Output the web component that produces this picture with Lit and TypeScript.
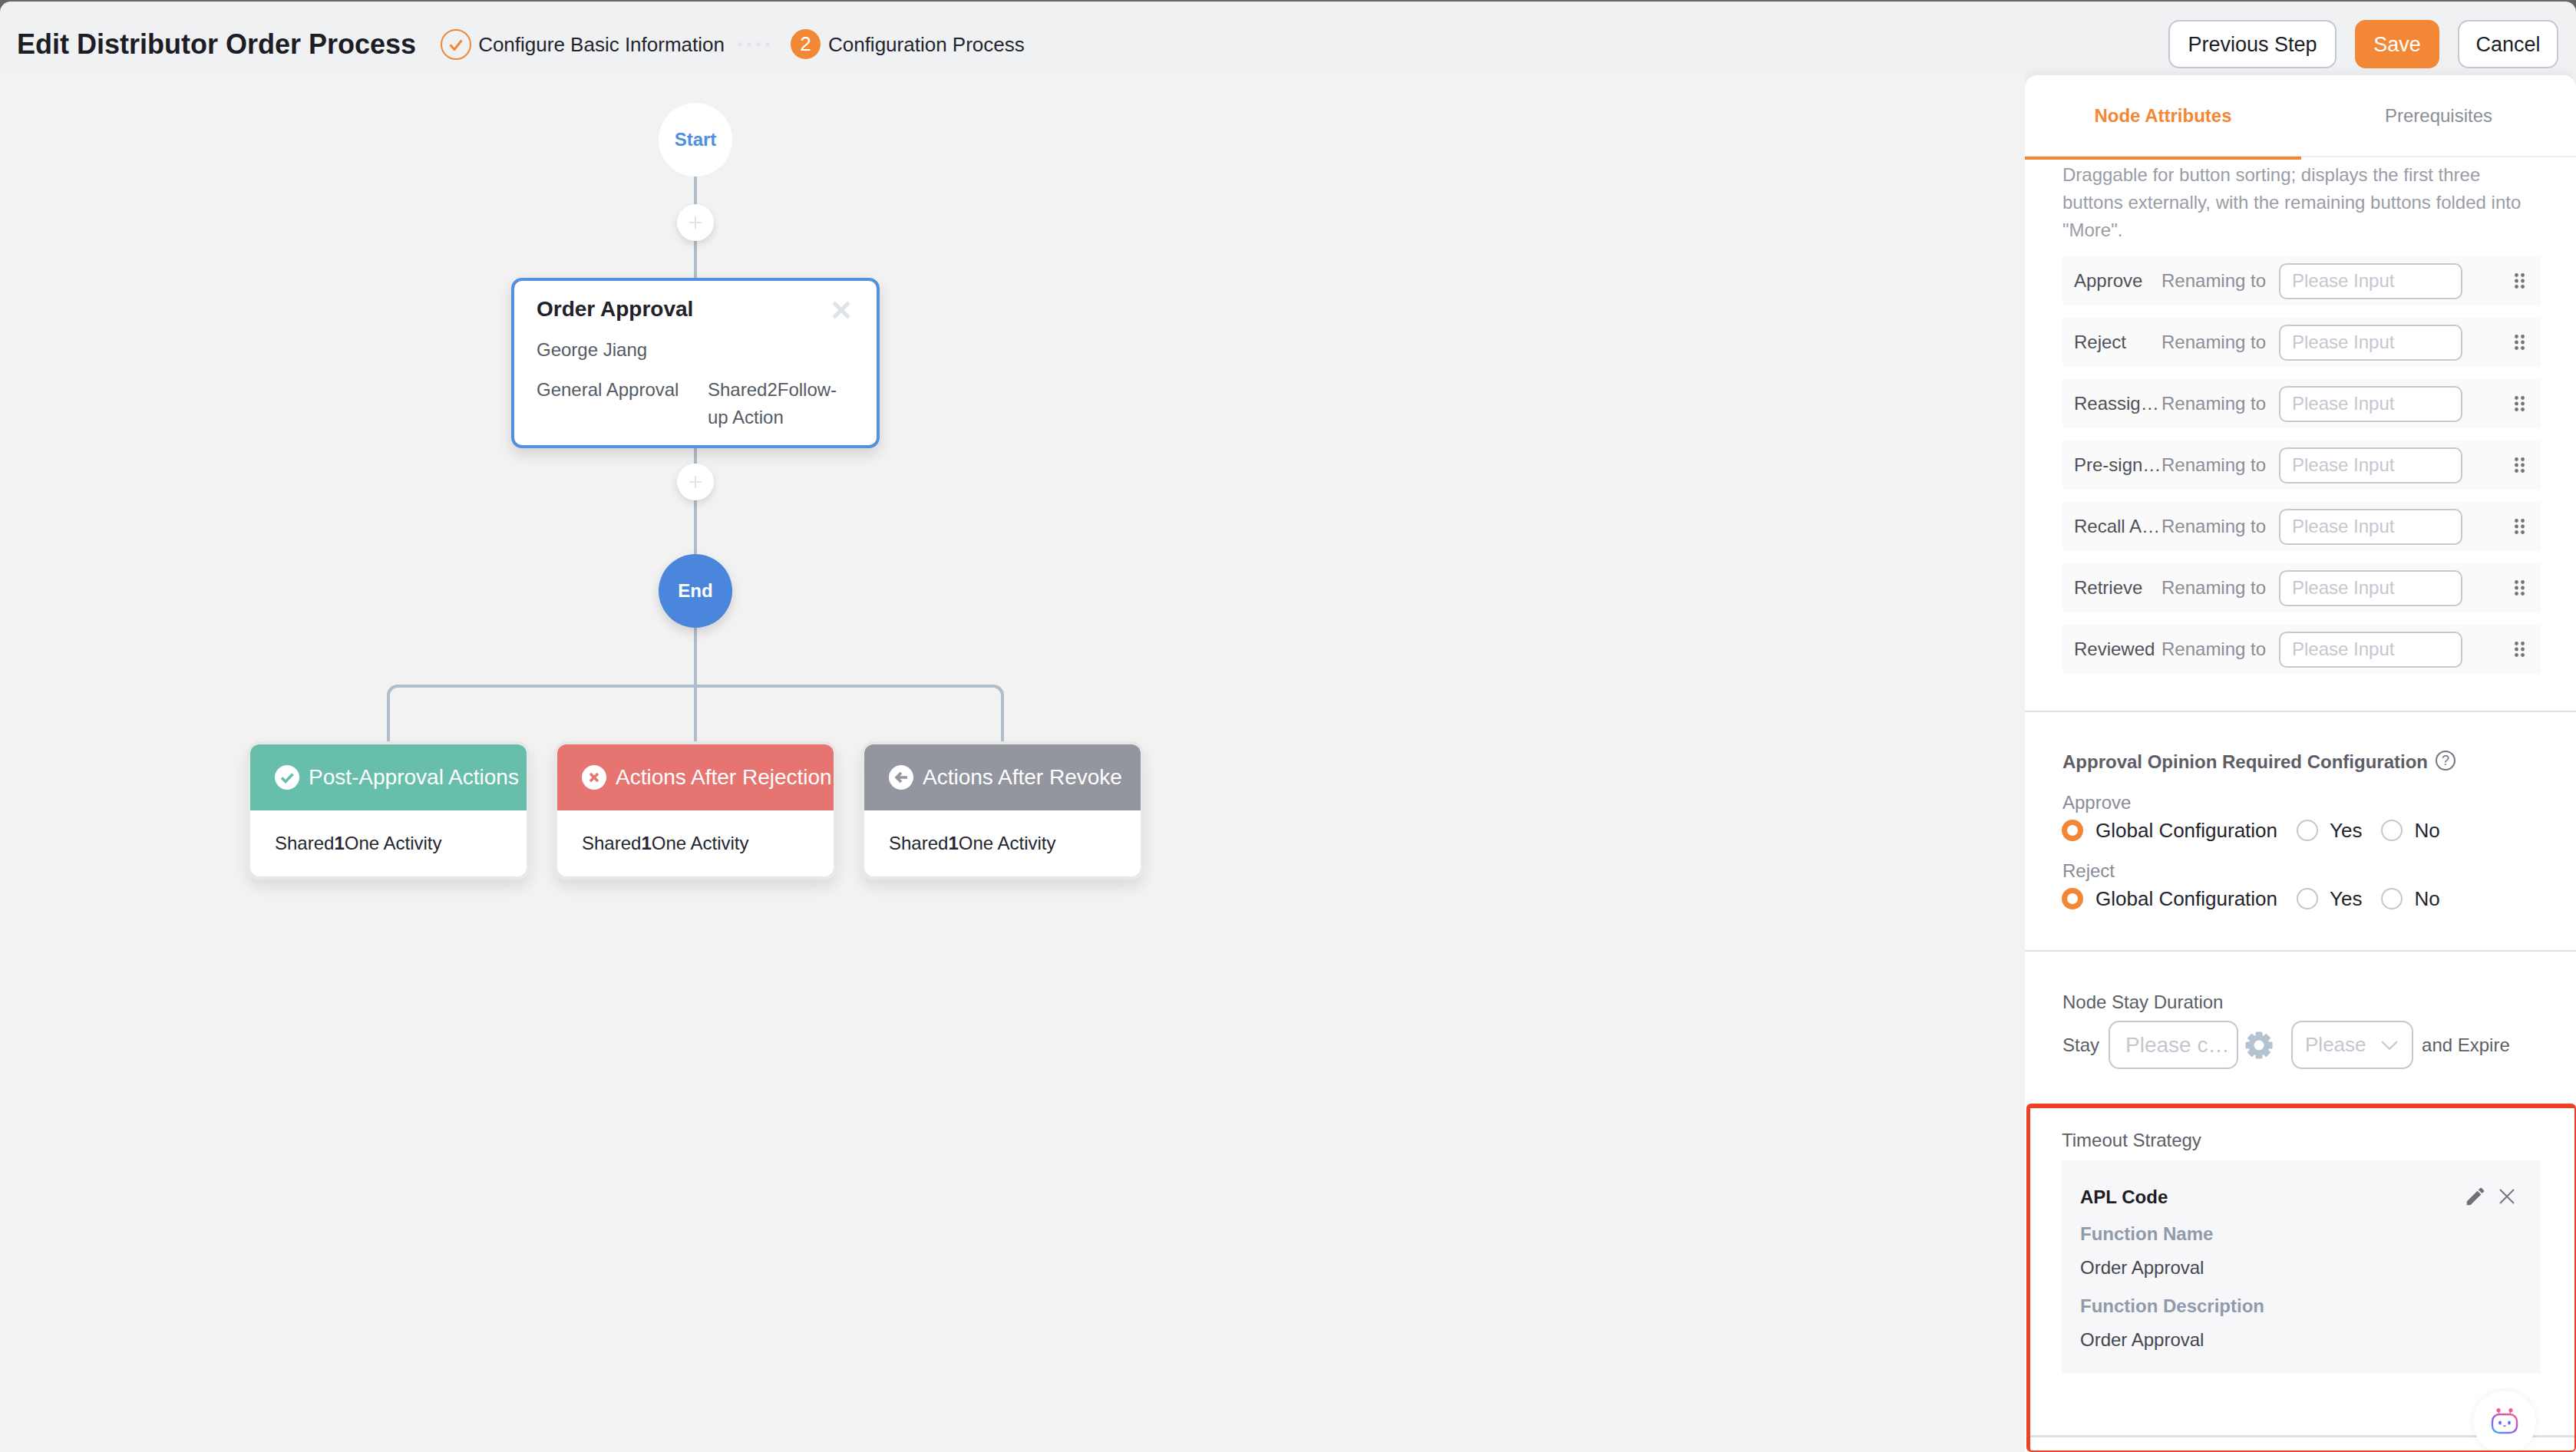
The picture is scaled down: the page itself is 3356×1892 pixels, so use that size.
import { LitElement, html, css, svg } from "lit";
import { customElement } from "lit/decorators.js";

const ROWS = ["Approve", "Reject", "Reassig…", "Pre-sign…", "Recall A…", "Retrieve", "Reviewed"];
const ACTIONS = [
  { cls: "c1 green", title: "Post-Approval Actions", icon: "check" },
  { cls: "c2 red", title: "Actions After Rejection", icon: "cross" },
  { cls: "c3 gray", title: "Actions After Revoke", icon: "back" },
];

@customElement("app-root")
export class AppRoot extends LitElement {
  static styles = css`
    :host { display: block; width: 3356px; height: 1892px; overflow: hidden; background: #666; font-family: "Liberation Sans", Arial, sans-serif; color: #23242c; }
    * { box-sizing: border-box; }
    .page { margin-top: 2px; height: 1890px; border-radius: 14px 14px 0 0; overflow: hidden; background: #f0f1f3; display: flex; flex-direction: column; }
    header { height: 96px; flex: none; display: flex; align-items: center; padding: 15px 23px 0 22px; }
    h1 { margin: 0 32px 0 0; font-size: 36px; line-height: 44px; font-weight: 700; color: #1c1d25; white-space: nowrap; }
    .step { display: flex; align-items: center; gap: 9px; font-size: 26px; white-space: nowrap; }
    .step svg { display: block; }
    .step span { padding-top: 2px; }
    .step.second { gap: 10px; }
    .num { width: 39px; height: 39px; border-radius: 50%; background: #f28736; color: #fff; display: flex; align-items: center; justify-content: center; font-size: 26px; }
    .dots { display: flex; gap: 6px; margin: 0 27px 0 17px; }
    .dots i { width: 6px; height: 6px; border-radius: 50%; background: #e2e4e8; }
    .actions { margin-left: auto; display: flex; gap: 24px; }
    button { height: 63px; border-radius: 14px; border: 2px solid #c4c8d2; background: #fff; font: 27px "Liberation Sans", Arial, sans-serif; color: #1c1d25; padding: 2px 0 0; }
    .b1 { width: 219px; }
    .b2 { width: 110px; background: #f28736; border-color: #f28736; color: #fff; }
    .b3 { width: 131px; }
    .main { flex: 1; min-height: 0; display: grid; grid-template-columns: 1fr 718px; }

    .canvas { position: relative; background: #f2f2f2; }
    .wires { position: absolute; left: 0; top: 0; }
    .circle { position: absolute; left: 858px; width: 96px; height: 96px; border-radius: 50%; display: flex; align-items: center; justify-content: center; font-size: 24px; font-weight: 700; }
    .start { top: 36px; background: #fff; color: #4f8fdf; }
    .end { top: 624px; background: #4a86dc; color: #fff; box-shadow: 0 6px 14px rgba(0,0,0,.14); }
    .plus { position: absolute; left: 882px; width: 48px; height: 48px; border-radius: 50%; background: #fff; box-shadow: 0 4px 10px rgba(0,0,0,.12); display: flex; align-items: center; justify-content: center; }
    .p1 { top: 168px; }
    .p2 { top: 506px; }
    .node { position: absolute; left: 666px; top: 264px; width: 480px; height: 222px; border: 4px solid #5590dc; border-radius: 14px; background: #fff; box-shadow: 0 8px 18px rgba(0,0,0,.13); padding: 19px 29px 0; }
    .node h3 { margin: 0; font-size: 28px; line-height: 36px; font-weight: 700; color: #20212a; }
    .node .x { position: absolute; right: 34px; top: 26px; }
    .node p { margin: 0; font-size: 24px; line-height: 36px; color: #555a64; }
    .node .who { margin-top: 17px; }
    .node .cols { margin-top: 16px; display: grid; grid-template-columns: 223px 180px; }
    .card { position: absolute; top: 868px; width: 368px; height: 180px; border: 4px solid #e8e8e8; border-radius: 16px; background: #fff; overflow: hidden; }
    .shadow { position: absolute; top: 868px; width: 368px; height: 180px; border-radius: 16px; box-shadow: 0 10px 18px rgba(0,0,0,.09); }
    .c1 { left: 322px; }
    .c2 { left: 722px; }
    .c3 { left: 1122px; }
    .card .head { height: 86px; display: flex; align-items: center; gap: 12px; padding: 0 0 0 32px; color: #fff; font-size: 28px; white-space: nowrap; }
    .green .head { background: #67bfab; }
    .red .head { background: #e67572; }
    .gray .head { background: #94969f; }
    .card .head svg { flex: none; display: block; }
    .card .body { padding: 25px 32px; font-size: 24px; line-height: 36px; color: #23262e; }
    .card b { font-weight: 700; }

    .panel { background: #fff; border-radius: 16px 16px 0 0; box-shadow: 0 -4px 14px rgba(0,0,0,.05); display: flex; flex-direction: column; min-height: 0; overflow: hidden; }
    .tabs { height: 107px; flex: none; border-bottom: 2px solid #eee; display: grid; grid-template-columns: 360px 1fr; margin-bottom: 5px; }
    .tab { height: 110px; display: flex; padding-top: 35px; justify-content: center; font-size: 24px; line-height: 36px; color: #8b8e98; }
    .tab.on { color: #f28736; font-weight: 700; border-bottom: 4px solid #f28736; }
    .sec { padding: 0 46px 0 49px; border-bottom: 2px solid #e2e2e2; }
    .s1 { padding-bottom: 48px; }
    .s2 { padding-top: 47px; padding-bottom: 49px; }
    .s3 { border-bottom: 0; padding-top: 48px; padding-bottom: 45px; }
    .desc { margin: 0 0 16px; font-size: 24px; line-height: 36px; color: #9a9ca6; }
    .rows { display: flex; flex-direction: column; gap: 16px; }
    .row { height: 64px; background: #fafafa; display: flex; align-items: center; padding-left: 15px; font-size: 24px; }
    .name { width: 114px; flex: none; color: #4f5159; white-space: nowrap; }
    .ren { width: 153px; flex: none; color: #8b8e98; white-space: nowrap; }
    input { font-family: inherit; outline: none; background: #fff; border: 2px solid #c4c8d2; min-width: 0; }
    input::placeholder { color: #c4c7d0; opacity: 1; }
    .row input { width: 239px; height: 47px; border-radius: 10px; padding: 0 15px; font-size: 24px; flex: none; }
    .grip { margin-left: 68px; display: block; }
    .sub { font-size: 24px; line-height: 36px; color: #8a8c95; }
    .h { font-size: 24px; line-height: 36px; font-weight: 700; color: #5c5e66; display: flex; align-items: center; gap: 10px; }
    .q { width: 26px; height: 26px; border: 2px solid #73767f; border-radius: 50%; color: #73767f; font-size: 18px; font-weight: 400; line-height: 22px; text-align: center; margin-top: -5px; }
    .s2 .sub { margin-top: 17px; }
    .radios { display: flex; align-items: center; height: 36px; font-size: 26px; color: #23242c; margin-left: -1px; }
    .radio { width: 28px; height: 28px; flex: none; border-radius: 50%; border: 2px solid #c4c8d2; margin-right: 15px; }
    .radio.on { border: 7px solid #f28736; margin-right: 16px; }
    .radios span { margin-right: 25px; }
    .sub2 { font-size: 24px; line-height: 36px; color: #5c5e66; }
    .stay { margin-top: 6px; display: flex; align-items: center; font-size: 24px; color: #5c5e66; white-space: nowrap; }
    .stay input { width: 169px; height: 63px; border-radius: 14px; margin-left: 12px; padding: 0 6px 0 20px; font-size: 28px; text-overflow: ellipsis; }
    .stay svg.gear { margin: 0 24px 0 9px; display: block; }
    .sel { width: 159px; height: 63px; border: 2px solid #c4c8d2; border-radius: 14px; display: flex; align-items: center; justify-content: space-between; padding: 0 18px 0 16px; font-size: 26px; color: #c4c7d0; margin-right: 11px; background: #fff; }
    .timeout { position: relative; flex: 1; min-height: 0; margin-left: 2px; border: solid #ee4022; border-width: 6px 2px 2px 5px; border-radius: 6px; padding: 24px 44px 0 41px; overflow: hidden; }
    .box { margin-top: 8px; height: 278px; background: #f7f7f9; padding: 30px 24px 0; position: relative; }
    .box .t { font-size: 24px; line-height: 36px; font-weight: 700; color: #1c1d25; }
    .box .k { font-size: 24px; line-height: 36px; font-weight: 700; color: #8f9bab; }
    .box .v { font-size: 24px; line-height: 36px; color: #43464e; margin-top: 8px; }
    .k1 { margin-top: 12px; }
    .k2 { margin-top: 14px; }
    .tools { position: absolute; right: 34px; top: 32px; display: flex; gap: 16px; align-items: center; }
    .tools svg { display: block; }
    .rule { margin: 80px -44px 0 -41px; height: 3px; background: #e0e0e0; }
    .fab { position: absolute; left: 577px; top: 368px; width: 82px; height: 82px; border-radius: 50%; background: #fff; box-shadow: 0 0 10px rgba(0,0,0,.07); display: flex; align-items: center; justify-content: center; padding-bottom: 2px; }
    .fab svg { display: block; }
  `;

  private grip() {
    const dots = [0, 1, 2].flatMap((r) => [0, 1].map((c) => svg`<circle cx=${2.5 + c * 8} cy=${2.5 + r * 7.5} r="2.4" fill="#6f727b"></circle>`));
    return html`<svg class="grip" width="13" height="20" viewBox="0 0 13 20">${dots}</svg>`;
  }

  private cardIcon(kind: string) {
    const glyph: Record<string, unknown> = {
      check: svg`<path d="M9 16.5l5 5 9.5-10" fill="none" stroke="#67bfab" stroke-width="3.6"></path>`,
      cross: svg`<path d="M11 11l10 10M21 11L11 21" fill="none" stroke="#e67572" stroke-width="3.6"></path>`,
      back: svg`<path d="M24 16H11M16 10l-6 6 6 6" fill="none" stroke="#94969f" stroke-width="3.6"></path>`,
    };
    return html`<svg width="32" height="32" viewBox="0 0 32 32"><circle cx="16" cy="16" r="16" fill="#fff"></circle>${glyph[kind]}</svg>`;
  }

  private gear() {
    const teeth = [0, 45, 90, 135].map((a) => svg`<rect x="13.5" y="0.5" width="9" height="35" rx="1.5" fill="#b5c2cf" transform="rotate(${a} 18 18)"></rect>`);
    return html`<svg class="gear" width="36" height="36" viewBox="0 0 36 36">${teeth}<circle cx="18" cy="18" r="13.5" fill="#b5c2cf"></circle><circle cx="18" cy="18" r="6.5" fill="#fff"></circle></svg>`;
  }

  private robot() {
    return html`<svg width="40" height="36" viewBox="0 0 40 36" fill="none">
      <defs>
        <linearGradient id="rb" x1="0.2" y1="1" x2="0.8" y2="0">
          <stop offset="0" stop-color="#4f9bff"></stop>
          <stop offset="0.45" stop-color="#9a55ea"></stop>
          <stop offset="1" stop-color="#ee5f8c"></stop>
        </linearGradient>
      </defs>
      <rect x="4" y="9" width="32" height="24" rx="9" stroke="url(#rb)" stroke-width="2.4"></rect>
      <path d="M13 9l-1-5M27 9l1-5" stroke="#ec6a8c" stroke-width="1.6"></path>
      <circle cx="12" cy="3.5" r="2.6" fill="#ee5f7c"></circle>
      <circle cx="28" cy="3.5" r="2.6" fill="#ee5f7c"></circle>
      <ellipse cx="14" cy="20" rx="1.9" ry="2.4" fill="#7a5cf0"></ellipse>
      <ellipse cx="26" cy="20" rx="1.9" ry="2.4" fill="#7a5cf0"></ellipse>
      <path d="M18.5 23.5q1.500 1.500 3 0" stroke="#7a5cf0" stroke-width="1.4"></path>
    </svg>`;
  }

  private plusIcon() {
    return html`<svg width="16" height="16" viewBox="0 0 16 16"><path d="M8 0v16M0 8h16" stroke="#e2e5eb" stroke-width="2"></path></svg>`;
  }

  private radios() {
    return html`<div class="radios">
      <i class="radio on"></i><span>Global Configuration</span>
      <i class="radio"></i><span>Yes</span>
      <i class="radio"></i><span>No</span>
    </div>`;
  }

  render() {
    return html`<div class="page">
      <header>
        <h1>Edit Distributor Order Process</h1>
        <div class="step">
          <svg width="40" height="40" viewBox="0 0 40 40"><circle cx="20" cy="20" r="19" fill="none" stroke="#f28736" stroke-width="2"></circle><path d="M12.500 20.500l5.500 6 9.500-12" fill="none" stroke="#f28736" stroke-width="3"></path></svg>
          <span>Configure Basic Information</span>
        </div>
        <div class="dots"><i></i><i></i><i></i><i></i></div>
        <div class="step second"><div class="num">2</div><span>Configuration Process</span></div>
        <div class="actions">
          <button class="b1">Previous Step</button>
          <button class="b2">Save</button>
          <button class="b3">Cancel</button>
        </div>
      </header>
      <div class="main">
        <section class="canvas">
          <svg class="wires" width="1600" height="900" fill="none" stroke="#b0bdca" stroke-width="4">
            <path d="M906 132V264M906 486V624M906 720V868"></path>
            <path d="M506 868V808a12 12 0 0 1 12-12H1294a12 12 0 0 1 12 12V868"></path>
          </svg>
          <div class="circle start">Start</div>
          <div class="plus p1">${this.plusIcon()}</div>
          <div class="node">
            <h3>Order Approval</h3>
            <svg class="x" width="24" height="24" viewBox="0 0 24 24"><path d="M2 2l20 20M22 2L2 22" stroke="#dfe3e8" stroke-width="5"></path></svg>
            <p class="who">George Jiang</p>
            <div class="cols"><p>General Approval</p><p>Shared2Follow-up Action</p></div>
          </div>
          <div class="plus p2">${this.plusIcon()}</div>
          <div class="circle end">End</div>
          ${ACTIONS.map((a) => html`<div class="shadow ${a.cls.split(" ")[0]}"></div><div class="card ${a.cls}">
            <div class="head">${this.cardIcon(a.icon)}<span>${a.title}</span></div>
            <div class="body">Shared<b>1</b>One Activity</div>
          </div>`)}
        </section>
        <aside class="panel">
          <div class="tabs">
            <div class="tab on">Node Attributes</div>
            <div class="tab">Prerequisites</div>
          </div>
          <div class="sec s1">
            <p class="desc">Draggable for button sorting; displays the first three buttons externally, with the remaining buttons folded into "More".</p>
            <div class="rows">
              ${ROWS.map((r) => html`<div class="row">
                <div class="name">${r}</div>
                <div class="ren">Renaming to</div>
                <input placeholder="Please Input" />
                ${this.grip()}
              </div>`)}
            </div>
          </div>
          <div class="sec s2">
            <div class="h">Approval Opinion Required Configuration <span class="q">?</span></div>
            <div class="sub">Approve</div>
            ${this.radios()}
            <div class="sub">Reject</div>
            ${this.radios()}
          </div>
          <div class="sec s3">
            <div class="sub2">Node Stay Duration</div>
            <div class="stay">
              Stay
              <input placeholder="Please choose" />
              ${this.gear()}
              <div class="sel">Please
                <svg width="22" height="12" viewBox="0 0 22 12"><path d="M1 1l10 10L21 1" fill="none" stroke="#c4c7d0" stroke-width="2"></path></svg>
              </div>
              and Expire
            </div>
          </div>
          <div class="timeout">
            <div class="sub2">Timeout Strategy</div>
            <div class="box">
              <div class="t">APL Code</div>
              <div class="tools">
                <svg width="30" height="30" viewBox="0 0 24 24"><path fill="#6f727b" d="M3 17.250V21h3.750L17.810 9.940l-3.750-3.750L3 17.250zM20.710 7.040a1 1 0 0 0 0-1.410l-2.340-2.340a1 1 0 0 0-1.410 0l-1.830 1.830 3.750 3.750 1.830-1.830z"></path></svg>
                <svg width="20" height="20" viewBox="0 0 20 20"><path d="M1 1l18 18M19 1L1 19" stroke="#6f727b" stroke-width="1.800"></path></svg>
              </div>
              <div class="k k1">Function Name</div>
              <div class="v">Order Approval</div>
              <div class="k k2">Function Description</div>
              <div class="v">Order Approval</div>
            </div>
            <div class="rule"></div>
            <div class="fab">${this.robot()}</div>
          </div>
        </aside>
      </div>
    </div>`;
  }
}
